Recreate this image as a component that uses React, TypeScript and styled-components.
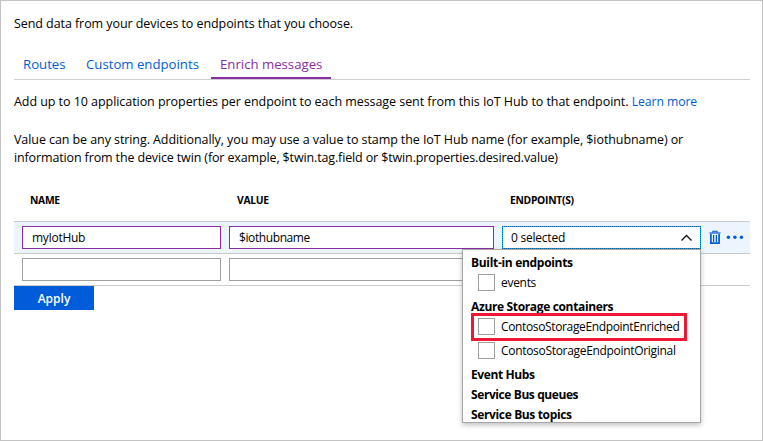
import React from "react";
import styled, { createGlobalStyle } from "styled-components";

const GlobalStyle = createGlobalStyle`
  *, *::before, *::after { box-sizing: border-box; }
  body { margin: 0; background: #fff; }
`;

const Frame = styled.main`
  display: flex;
  flex-direction: column;
  width: 763px;
  height: 441px;
  padding: 14px 12px 0 13px;
  border: 1px solid #c3c3c3;
  overflow: hidden;
  color: #000;
  background: #fff;
  font: 12.5px/18px "Open Sans", "Segoe UI", sans-serif;
`;

const Line = styled.div<{ $track?: number }>`
  height: 18px;
  white-space: nowrap;
  letter-spacing: ${(p) => p.$track ?? -0.07}px;
`;

const Intro = styled.section`
  margin-top: 13px;
`;

const Details = styled.section`
  margin-top: 20px;
`;

const Link = styled.a`
  color: #015cda;
  font-size: 12.2px;
  letter-spacing: -0.06px;
  text-decoration: none;
`;

const Tabs = styled.nav`
  display: flex;
  height: 32px;
  margin-top: 15px;
  border-bottom: 1px solid #cfcfcf;
`;

const Tab = styled.a<{ $width: number; $active?: boolean }>`
  width: ${(p) => p.$width}px;
  height: 31px;
  padding: 7px 0 0 9px;
  border-bottom: 2px solid ${(p) => (p.$active ? "#8a2da5" : "transparent")};
  color: ${(p) => (p.$active ? "#8a2da5" : "#015cda")};
  font-size: 13.2px;
  line-height: 18px;
  white-space: nowrap;
`;

const Table = styled.section`
  margin-top: 24px;
`;

const HeaderRow = styled.div`
  display: grid;
  grid-template-columns: 207px 273px 1fr;
  height: 30px;
  padding-left: 16px;
  font-size: 10.3px;
  font-weight: 700;
  line-height: 18px;
  letter-spacing: -0.28px;
`;

const Row = styled.div<{ $active?: boolean }>`
  display: flex;
  align-items: flex-start;
  gap: 8px;
  height: 32px;
  padding: 4px 0 0 8px;
  border-bottom: 1px solid #c8cacc;
  background: ${(p) => (p.$active ? "#ecf5fe" : "#fff")};
`;

const Rows = styled.div`
  border-top: 1px solid #c8cacc;
`;

const Field = styled.div<{ $width: number; $filled?: boolean; $track?: number }>`
  width: ${(p) => p.$width}px;
  height: 23px;
  padding-left: 9px;
  border: 1px solid ${(p) => (p.$filled ? "#8a2da5" : "#a0a0a0")};
  background: #fff;
  font-size: 12px;
  line-height: 21px;
  letter-spacing: ${(p) => p.$track ?? 0}px;
`;

const Select = styled.div`
  position: relative;
  width: 199px;
  height: 23px;
`;

const SelectBox = styled.div`
  display: flex;
  align-items: center;
  justify-content: space-between;
  height: 23px;
  padding: 0 7px 0 8px;
  border: 1px dotted #0063a8;
  background: linear-gradient(#fff, #fff) padding-box, #00b4f0 border-box;
  font-size: 12px;
  line-height: 21px;
  letter-spacing: -0.23px;
`;

const Menu = styled.div`
  position: absolute;
  z-index: 1;
  top: 23px;
  right: 0;
  width: 239px;
  height: 174px;
  padding: 1px 0 0 8px;
  overflow: hidden;
  border: 1px solid #a6a6a6;
  background: #fff;
  box-shadow: 0 2px 5px rgba(0, 0, 0, 0.25);
`;

const GroupTitle = styled.div<{ $track: number }>`
  height: 20px;
  padding-top: 3px;
  font-size: 12px;
  font-weight: 700;
  line-height: 18px;
  letter-spacing: ${(p) => p.$track}px;
`;

const Option = styled.div<{ $track?: number }>`
  position: relative;
  display: flex;
  height: 24px;
  padding: 3px 0 0 7px;
  gap: 6px;
  font-size: 12px;
  line-height: 18px;
  letter-spacing: ${(p) => p.$track ?? -0.3}px;
`;

const Check = styled.span`
  width: 17px;
  height: 17px;
  border: 1px solid #a0a0a0;
  background: #fff;
`;

const Callout = styled.span`
  position: absolute;
  top: -2px;
  left: 0;
  width: 216px;
  height: 28px;
  border: 3px solid #ee1835;
`;

const Actions = styled.div`
  display: flex;
  align-items: center;
  height: 23px;
`;

const ApplyButton = styled.button`
  width: 80px;
  height: 24px;
  padding: 1px 0 0;
  border: 0;
  color: #fff;
  background: #015cda;
  font: 600 12px/23px "Open Sans", "Segoe UI", sans-serif;
`;

const RowIcons = () => (
  <svg width="36" height="23" viewBox="0 0 36 23" fill="none">
    <path d="M0.5 7h11M3.8 6.5V5.4h4.4v1.1" stroke="#2f76df" strokeWidth="1.3" />
    <path d="M1.9 8v9.2h8.2V8" stroke="#015cda" strokeWidth="1.7" />
    <path d="M4.6 9v7M7.4 9v7" stroke="#015cda" strokeWidth="1.3" />
    <g fill="#015cda">
      <circle cx="19.4" cy="11.2" r="1.7" />
      <circle cx="25.9" cy="11.2" r="1.7" />
      <circle cx="32.4" cy="11.2" r="1.7" />
    </g>
  </svg>
);

export default function App() {
  return (
    <>
      <GlobalStyle />
      <Frame>
        <Line>Send data from your devices to endpoints that you choose.</Line>
        <Tabs>
          <Tab $width={63}>Routes</Tab>
          <Tab $width={134}>Custom endpoints</Tab>
          <Tab $width={120} $active>Enrich messages</Tab>
        </Tabs>
        <Intro>
          <Line $track={-0.055}>
            Add up to 10 application properties per endpoint to each message sent from this IoT Hub to that endpoint.{" "}
            <Link>Learn more</Link>
          </Line>
        </Intro>
        <Details>
          <Line $track={-0.08}>
            Value can be any string. Additionally, you may use a value to stamp the IoT Hub name (for example, $iothubname) or
          </Line>
          <Line $track={-0.135}>
            information from the device twin (for example, $twin.tag.field or $twin.properties.desired.value)
          </Line>
        </Details>
        <Table>
          <HeaderRow>
            <span>NAME</span>
            <span>VALUE</span>
            <span>ENDPOINT(S)</span>
          </HeaderRow>
          <Rows>
            <Row $active>
              <Field $width={199} $filled $track={-0.3}>myIotHub</Field>
              <Field $width={265} $filled $track={-0.4}>$iothubname</Field>
              <Select>
                <SelectBox>
                  0 selected
                  <svg width="13" height="9" viewBox="0 0 13 9" fill="none">
                    <path d="M1.5 7.5 6.5 2.5 11.5 7.5" stroke="#111" strokeWidth="1.3" />
                  </svg>
                </SelectBox>
                <Menu>
                  <GroupTitle $track={-0.31}>Built-in endpoints</GroupTitle>
                  <Option><Check />events</Option>
                  <GroupTitle $track={-0.35}>Azure Storage containers</GroupTitle>
                  <Option $track={-0.36}><Check />ContosoStorageEndpointEnriched<Callout /></Option>
                  <Option $track={-0.31}><Check />ContosoStorageEndpointOriginal</Option>
                  <GroupTitle $track={-0.4}>Event Hubs</GroupTitle>
                  <GroupTitle $track={-0.41}>Service Bus queues</GroupTitle>
                  <GroupTitle $track={-0.36}>Service Bus topics</GroupTitle>
                </Menu>
              </Select>
              <Actions><RowIcons /></Actions>
            </Row>
            <Row>
              <Field $width={199} />
              <Field $width={265} />
            </Row>
          </Rows>
        </Table>
        <ApplyButton>Apply</ApplyButton>
      </Frame>
    </>
  );
}
